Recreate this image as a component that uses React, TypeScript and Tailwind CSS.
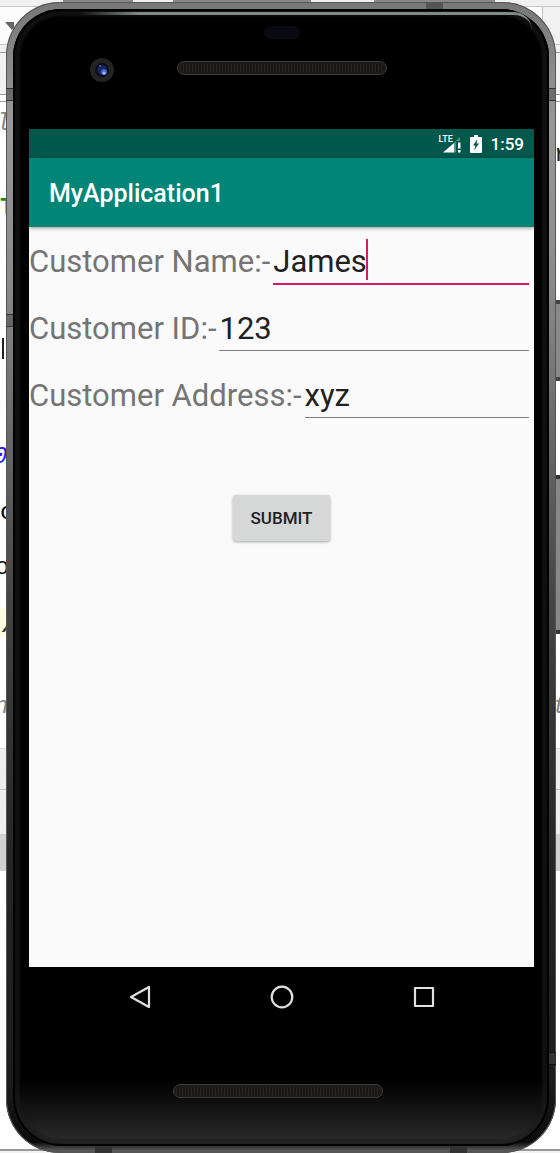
// App.tsx
// Customer form running in an emulated phone, with the code editor behind it.
import type { ReactNode } from "react";

const fields = [
  { id: "customer-name", label: "Customer Name:-", value: "James", focused: true },
  { id: "customer-id", label: "Customer ID:-", value: "123", focused: false },
  { id: "customer-address", label: "Customer Address:-", value: "xyz", focused: false },
];

function EditorBackdrop() {
  return (
    <div aria-hidden="true" className="absolute inset-0 overflow-hidden bg-white font-['Liberation_Mono',monospace] text-2xl leading-6">
      {/* toolbar and tab strips */}
      <div className="flex h-[6px] bg-[#f1f1f1]">
        <div className="ml-[63px] h-[2px] w-[70px] bg-[#888]" />
        <div className="ml-10 h-[2px] w-[138px] bg-[#888]" />
        <div className="ml-[63px] h-[2px] w-[121px] bg-[#888]" />
      </div>
      <div className="flex h-[39px] justify-between border-y border-[#c4c4c4] bg-[#fcfcfc]">
        <svg width="14" height="30" viewBox="0 0 14 30">
          <path d="M5 15h14l-7 8z" fill="#666" />
        </svg>
        <div className="w-[18px] border-l border-[#c4c4c4] bg-[#f1f1f1]" />
      </div>
      <div className="h-[7px] bg-[#f1f1f1]" />
      <div className="h-[43px] border-y border-[#999] bg-[#f1f1f1]" />
      <div className="h-[7px] border-b border-[#999] bg-white" />

      {/* code cut off by the phone */}
      <span className="absolute top-[112px] -left-[4px] text-[#888] italic">l</span>
      <span className="absolute top-[196px] left-0 font-bold text-[#208a20]">T</span>
      <span className="absolute top-[338px] left-[2px] h-[21px] w-[2px] bg-[#222]" />
      <span className="absolute top-[445px] -left-[7px] text-[#1a1aff] italic">0</span>
      <span className="absolute top-[501px] left-0 text-black">c</span>
      <span className="absolute top-[556px] -left-[5px] text-black">o</span>
      <span className="absolute top-[608px] left-0 h-[28px] w-[8px] bg-[#fffae3]" />
      <span className="absolute top-[614px] left-[2px] font-bold text-[#333] italic">/</span>
      <span className="absolute top-[695px] -left-[6px] text-[#888] italic">n</span>
      <span className="absolute top-[143px] left-[554px] text-[#222]">r</span>
      <span className="absolute top-[695px] left-[553px] text-[#888] italic">t</span>

      {/* tool window */}
      <div className="absolute inset-x-0 top-[748px] h-[86px] border-t border-[#ddd] bg-[#eee]">
        <div className="h-[41px] border-b border-[#c4c4c4]" />
      </div>
      <div className="absolute inset-x-0 top-[834px] h-[37px] bg-[#d1d1d1]" />
      <div className="absolute inset-x-0 bottom-0 h-[4px] border-t-2 border-[#999] bg-[#f1f1f1]" />
    </div>
  );
}

function Speaker() {
  return (
    <div className="h-[14px] w-[210px] rounded-full border border-[#3c3c3c] bg-[#1c1b18] p-[2px]">
      <div className="h-full rounded-full bg-[repeating-linear-gradient(90deg,#2a2822_0px,#2a2822_1px,#171613_1px,#171613_3px)]" />
    </div>
  );
}

function Forehead() {
  return (
    <div className="relative h-[120px]">
      <div className="absolute top-[3px] right-[2px] left-[50px] h-[18px] rounded-tr-[40px] border-t-[3px] border-[#7f8a89] [mask-image:linear-gradient(90deg,transparent,black_60px)]" />
      <div className="absolute top-[17px] left-1/2 h-[13px] w-[36px] -translate-x-1/2 rounded-full bg-[#090a11]" />
      <svg className="absolute top-[49px] left-[61px]" width="24" height="24" viewBox="0 0 24 24">
        <circle cx="12" cy="12" r="12" fill="#232323" />
        <circle cx="12" cy="12" r="7" fill="#0a0c1c" />
        <circle cx="12" cy="12" r="5" fill="#18235c" />
        <circle cx="10" cy="8" r="1" fill="#4c62c0" />
        <circle cx="14" cy="14" r="3" fill="#4a62c8" />
        <circle cx="14" cy="15" r="1.5" fill="#a9b9ff" />
      </svg>
      <div className="absolute top-[52px] left-1/2 -translate-x-1/2">
        <Speaker />
      </div>
    </div>
  );
}

function StatusBar() {
  return (
    <div className="flex h-[29px] items-center justify-end bg-[#00574b] pr-[10px] text-white">
      <div className="relative h-[18px] w-[23px]">
        <span className="absolute top-0 left-0 text-[9px] leading-[8px] font-medium">LTE</span>
        <svg className="absolute inset-0" width="23" height="18" viewBox="0 0 23 18">
          <path d="M17 6 21 2v4h-4v11.500h-2V8z" fill="#fff" fillOpacity=".35" />
          <path d="M4 17.500 15 8v9.500z" fill="#fff" />
          <path d="M19 7.500h2.500v6H19zM19 15h2.500v2.500H19z" fill="#fff" />
        </svg>
      </div>
      <svg className="ml-2" width="12" height="18" viewBox="0 0 12 18">
        <path d="M4 0h4v2h3q1 0 1 1v14q0 1-1 1H1q-1 0-1-1V3q0-1 1-1h3z" fill="#fff" />
        <path d="M7.500 4 3 10.500h2.500l-1.500 5L9 8.500H6.500z" fill="#00574b" />
      </svg>
      <span className="ml-[9px] text-[17px] leading-5 font-medium">1:59</span>
    </div>
  );
}

function NavButton({ label, children }: { label: string; children: ReactNode }) {
  return (
    <button type="button" aria-label={label} className="flex h-[59px] w-[142px] items-center justify-center">
      <svg width="24" height="24" viewBox="0 0 24 24" fill="none" stroke="#e0e0e0" strokeWidth="2.2" strokeLinejoin="round">
        {children}
      </svg>
    </button>
  );
}

export default function App() {
  return (
    <div className="relative flex min-h-screen flex-col pt-[2px] pr-1 pl-[6px] font-[Roboto,sans-serif]">
      <EditorBackdrop />

      {/* volume and power keys */}
      <div className="absolute top-[300px] right-0 h-[81px] w-[5px] border-y-4 border-l border-[#444] bg-[#8a8a8a]" />
      <div className="absolute top-[475px] right-0 h-[159px] w-[6px] border-y-4 border-l-2 border-[#333] bg-[#888]" />

      <div className="relative flex flex-1 flex-col overflow-hidden rounded-[54px] bg-[linear-gradient(180deg,#777_0px,#999_120px,#8a8a8a_280px,#444_600px,#262626_850px,#1c1c1c_1080px,#0a0a0a_1140px,#555_1148px)] p-[7px] shadow-[inset_0_0_0_1px_#555]">
        {/* antenna bands */}
        <div className="absolute inset-x-0 top-[86px] h-[13px] border-y border-[#333] bg-[#555]/60" />
        <div className="absolute top-[312px] left-0 h-[13px] w-2 border-y border-[#333] bg-[#555]/60" />
        <div className="absolute top-[1050px] right-0 h-[13px] w-2 border-y border-[#111] bg-[#333]" />
        <div className="absolute top-0 right-[113px] h-2 w-[17px] bg-[#555]" />
        <div className="absolute bottom-0 left-[89px] h-2 w-[17px] bg-[#333]" />
        <div className="absolute right-[89px] bottom-0 h-2 w-[17px] bg-[#333]" />

        <div className="relative flex flex-1 flex-col rounded-[48px] bg-[linear-gradient(180deg,#000_0px,#000_1070px,#161616_1105px,#2e2e2e_1135px)] pr-[15px] pl-4 shadow-[inset_0_0_1px_2px_#000,inset_0_0_2px_7px_#1a1a1a99]">
          <Forehead />

          <StatusBar />
          <header className="relative flex h-[69px] items-center bg-[#008577] px-5 pt-[3px] shadow-[0_1px_4px_#0006]">
            <h1 className="text-[25px] leading-8 font-medium text-white">MyApplication1</h1>
          </header>
          <form className="flex flex-1 flex-col bg-[#fafafa]" onSubmit={(e) => e.preventDefault()}>
            {fields.map((field) => (
              <div key={field.id} className="flex h-[67px] items-baseline gap-[3px] pt-[13px] pr-[5px] text-[31px] leading-10">
                <label htmlFor={field.id} className="text-[#757575]">
                  {field.label}
                </label>
                <div className="relative min-w-0 flex-1">
                  <input
                    id={field.id}
                    type="text"
                    defaultValue={field.value}
                    className={
                      field.focused
                        ? "h-[45px] w-full border-b-2 border-[#d81b60] text-[#212121] caret-transparent outline-none"
                        : "h-[44px] w-full border-b border-[#808080] text-[#212121] outline-none"
                    }
                  />
                  {field.focused && <span className="absolute -top-px left-[93px] h-[41px] w-[2px] bg-[#d81b60]" />}
                </div>
              </div>
            ))}
            <button
              type="submit"
              className="mt-[67px] h-[46px] self-center rounded-[3px] bg-[#d6d7d7] px-[18px] text-[17px] leading-6 font-medium text-[#212121] shadow-[0_1px_3px_#0005]"
            >
              SUBMIT
            </button>
          </form>

          <nav className="flex h-[59px] justify-center">
            <NavButton label="Back">
              <path d="M21 2v20L3 12z" />
            </NavButton>
            <NavButton label="Home">
              <circle cx="12" cy="12" r="10.300" />
            </NavButton>
            <NavButton label="Overview">
              <rect x="3" y="3" width="18" height="18" />
            </NavButton>
          </nav>
          <div className="flex h-[120px] justify-center pt-[58px] pr-2">
            <Speaker />
          </div>
        </div>
      </div>
    </div>
  );
}
